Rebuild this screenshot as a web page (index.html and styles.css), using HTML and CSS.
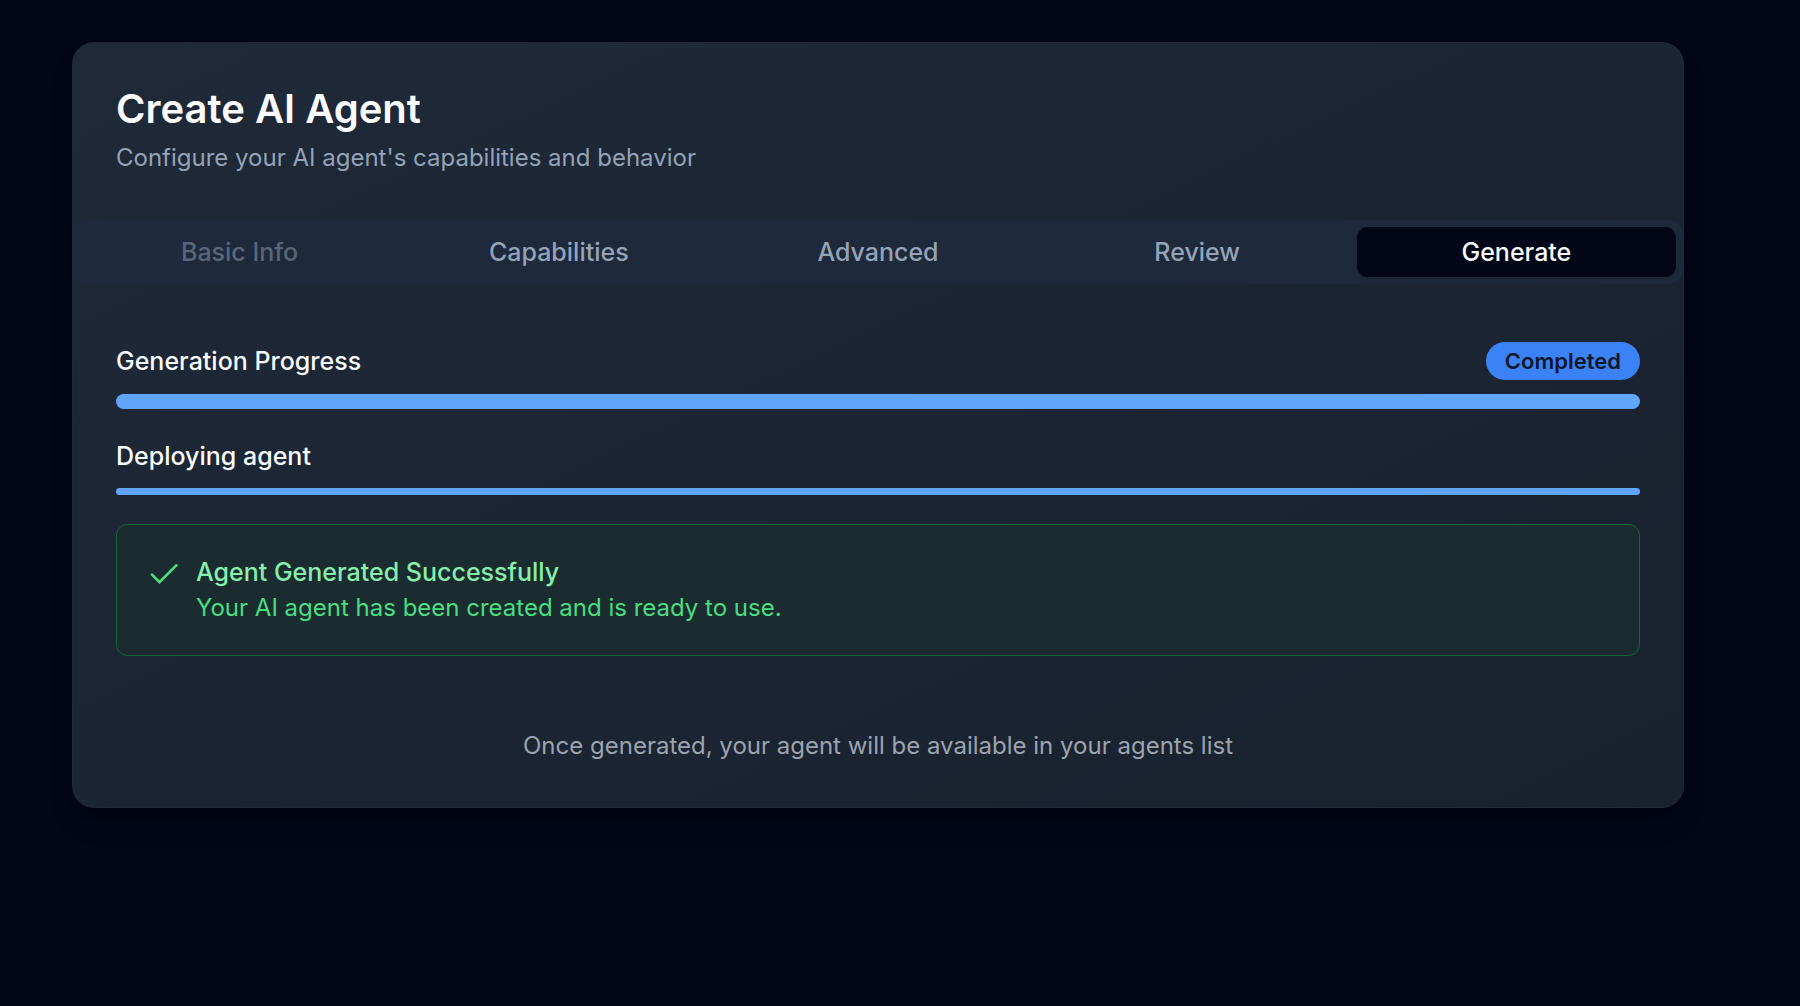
FILE: index.html
```html
<!DOCTYPE html>
<html lang="en">
<head>
<meta charset="utf-8">
<meta name="viewport" content="width=device-width, initial-scale=1">
<title>Create AI Agent</title>
<link rel="stylesheet" href="styles.css">
</head>
<body>
<main class="card">
  <header class="card-header">
    <h1 class="title">Create AI Agent</h1>
    <p class="subtitle">Configure your AI agent's capabilities and behavior</p>
  </header>
  <div class="tabs" role="tablist">
    <button class="tab" type="button" role="tab" aria-selected="false" disabled>Basic Info</button>
    <button class="tab" type="button" role="tab" aria-selected="false">Capabilities</button>
    <button class="tab" type="button" role="tab" aria-selected="false">Advanced</button>
    <button class="tab" type="button" role="tab" aria-selected="false">Review</button>
    <button class="tab tab-active" type="button" role="tab" aria-selected="true">Generate</button>
  </div>
  <section class="panel" role="tabpanel" aria-label="Generate">
    <div class="progress-head">
      <h2 class="label">Generation Progress</h2>
      <span class="badge">Completed</span>
    </div>
    <div class="bar" role="progressbar" aria-label="Generation Progress" aria-valuenow="100"></div>
    <h3 class="label step-label">Deploying agent</h3>
    <div class="bar bar-thin" role="progressbar" aria-label="Deploying agent" aria-valuenow="100"></div>
    <div class="alert" role="status">
      <svg class="check" viewBox="0 0 28 22" fill="none" stroke="currentColor" stroke-width="2.7" stroke-linecap="round" stroke-linejoin="miter" aria-hidden="true"><path d="M2 11.6 9.5 19.2 26.3 2.4"/></svg>
      <div>
        <p class="alert-title">Agent Generated Successfully</p>
        <p class="alert-text">Your AI agent has been created and is ready to use.</p>
      </div>
    </div>
  </section>
  <footer class="card-footer">Once generated, your agent will be available in your agents list</footer>
</main>
</body>
</html>
```
FILE: styles.css
```css
* {
  box-sizing: border-box;
}

body {
  margin: 0;
  min-height: 100vh;
  padding: 42px 116px 42px 72px;
  background: #020617;
  color: #f8fafc;
  font-family: Inter, "Liberation Sans", sans-serif;
  font-size: 24px;
  line-height: 36px;
}

h1, h2, h3, p {
  margin: 0;
}

.card {
  border: 1px solid #1f2937;
  border-radius: 22px;
  background: linear-gradient(to bottom right, #1f2937, #19212f);
  box-shadow: 0 18px 28px -6px rgba(0, 0, 0, 0.2), 0 8px 12px -6px rgba(0, 0, 0, 0.2);
}

.card-header {
  padding: 43px 43px 44px;
}

.title {
  font-size: 40px;
  font-weight: 600;
  line-height: 46px;
}

.subtitle {
  margin-top: 8px;
  color: #94a3b8;
}

.tabs {
  display: grid;
  grid-template-columns: repeat(5, 1fr);
  padding: 7px;
  border-radius: 15px;
  background: #1e293b;
}

.tab {
  padding: 7px 20px;
  border: 0;
  border-radius: 11px;
  background: none;
  color: #94a3b8;
  font: inherit;
  font-size: 25px;
  font-weight: 500;
}

.tab:disabled {
  opacity: 0.5;
}

.tab-active {
  background: #020617;
  color: #f8fafc;
  box-shadow: 0 2px 4px rgba(0, 0, 0, 0.1);
}

.panel {
  padding: 58px 43px 0;
}

.progress-head {
  display: flex;
  align-items: center;
  justify-content: space-between;
}

.label {
  font-size: 25px;
  font-weight: 500;
}

.badge {
  padding: 4px 19px;
  border-radius: 19px;
  background: #3b82f6;
  color: #0f172a;
  font-size: 22px;
  font-weight: 600;
  line-height: 30px;
}

.bar {
  height: 15px;
  margin-top: 14px;
  border-radius: 8px;
  background: #60a5fa;
}

.step-label {
  margin-top: 29px;
}

.bar-thin {
  height: 7px;
}

.alert {
  display: flex;
  gap: 18px;
  margin-top: 29px;
  padding: 29px 33px;
  border: 1px solid #166534;
  border-radius: 11px;
  background: #1b2c31;
}

.check {
  flex: none;
  width: 28px;
  height: 22px;
  margin-top: 9px;
  color: #4ade80;
}

.alert-title {
  color: #86efac;
  font-size: 25px;
  font-weight: 500;
}

.alert-text {
  color: #4ade80;
}

.card-footer {
  padding: 72px 43px 43px;
  color: #9ca3af;
  text-align: center;
}
```
